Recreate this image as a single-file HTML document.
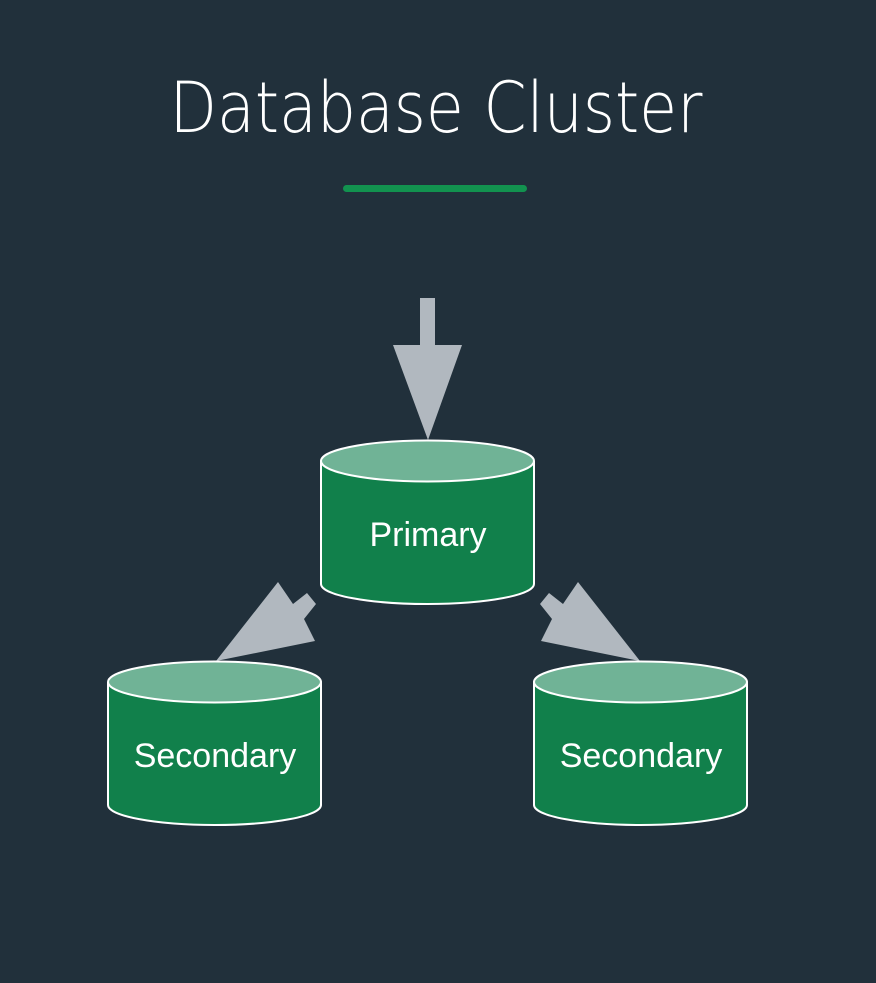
<!DOCTYPE html>
<html><head><meta charset="utf-8"><style>
html,body{margin:0;padding:0;background:#21303b;}
svg{display:block}
</style></head><body>
<svg width="876" height="983" viewBox="0 0 876 983" xmlns="http://www.w3.org/2000/svg">
<rect width="876" height="983" fill="#21303b"/>
<text x="436" y="132" text-anchor="middle" font-family="DejaVu Sans, sans-serif" font-weight="200" font-size="70" fill="#ffffff" textLength="533" lengthAdjust="spacingAndGlyphs">Database Cluster</text>
<rect x="343" y="185" width="184" height="7" rx="3.5" fill="#12924f"/>
<polygon points="420,298 435,298 435,345 462,345 428,440 393,345 420,345" fill="#b1b8bf"/>
<polygon points="540,604 549,593 563,604 578,582 640,661 541,641 552,619" fill="#b1b8bf"/>
<polygon points="316,604 307,593 293,604 278,582 216,661 315,641 304,619" fill="#b1b8bf"/>
<g stroke="#ffffff" stroke-width="2">
<path d="M321,461 L321,584 A106.5,20 0 0 0 534,584 L534,461" fill="#11804b"/>
<ellipse cx="427.5" cy="461" rx="106.5" ry="20.5" fill="#70b396"/>
<path d="M108,682 L108,805 A106.5,20 0 0 0 321,805 L321,682" fill="#11804b"/>
<ellipse cx="214.5" cy="682" rx="106.5" ry="20.5" fill="#70b396"/>
<path d="M534,682 L534,805 A106.5,20 0 0 0 747,805 L747,682" fill="#11804b"/>
<ellipse cx="640.5" cy="682" rx="106.5" ry="20.5" fill="#70b396"/>
</g>
<g font-family="Liberation Sans, Arial, sans-serif" font-size="34" fill="#ffffff" text-anchor="middle">
<text x="428" y="546">Primary</text>
<text x="215" y="767">Secondary</text>
<text x="641" y="767">Secondary</text>
</g>
</svg>
</body></html>
